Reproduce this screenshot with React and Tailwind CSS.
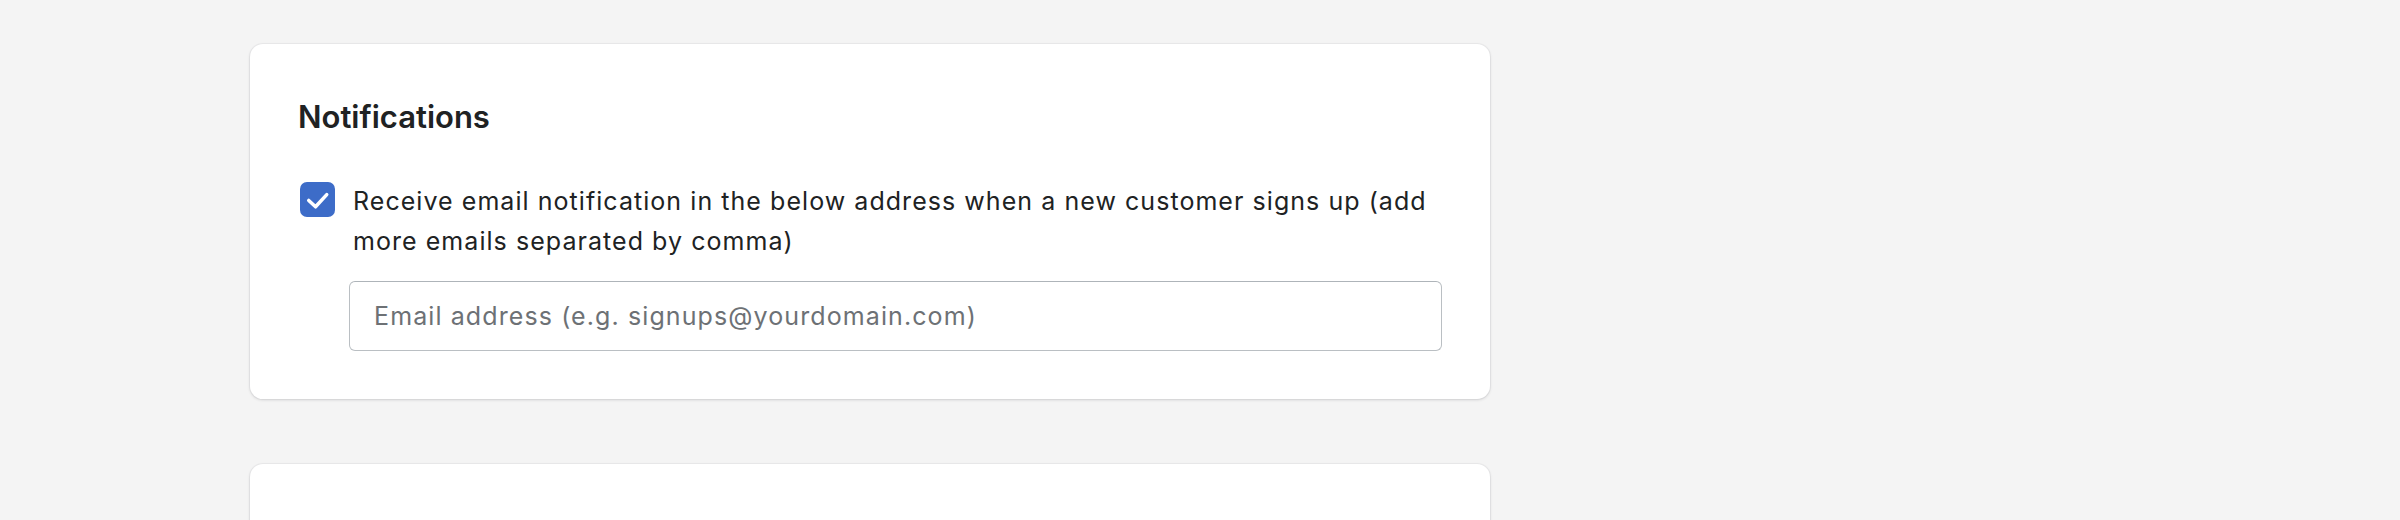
import React from 'react'

// 通知设置卡片
function CheckIcon() {
  return (
    <svg width="35" height="35" viewBox="0 0 36 36" fill="none">
      <path d="M9 19 L16 25.5 L27.5 13" stroke="#ffffff" strokeWidth="3.6" strokeLinecap="round" strokeLinejoin="round" />
    </svg>
  )
}

function NotificationsCard() {
  return (
    <div className="w-[1240px] rounded-[13px] bg-white px-12 pt-[55px] pb-12 shadow-[0_0_0_1px_rgba(63,63,68,0.04),0_1px_3px_rgba(63,63,68,0.18)]">
      <h2 className="text-[31px] leading-[36px] font-semibold text-[#202223]">Notifications</h2>

      {/* 复选框 + 说明 */}
      <div className="mt-[46px] flex items-start gap-[18px]">
        <div className="ml-[2px] mt-px flex h-[35px] w-[35px] shrink-0 items-center justify-center rounded-[7px] bg-[#3d6cc8]">
          <CheckIcon />
        </div>
        <div className="text-[25px] leading-[40px] tracking-[1.05px] text-[#202223]">
          Receive email notification in the below address when a new customer signs up (add more emails separated by comma)
        </div>
      </div>

      {/* 邮箱输入框 */}
      <div className="ml-[51px] mt-[20px]">
        <input
          type="text"
          placeholder="Email address (e.g. signups@yourdomain.com)"
          className="h-[70px] w-full rounded-[6px] border border-[#babfc3] border-t-[#aeb4b9] bg-white pl-[24px] pr-4 text-[25px] tracking-[1.1px] text-[#202223] placeholder:text-[#6d7175] outline-none"
        />
      </div>
    </div>
  )
}

export default function App() {
  return (
    <div
      className="min-h-[520px] w-full overflow-hidden bg-[#f4f4f4] pl-[250px] pt-[44px]"
      style={{ fontFamily: 'Inter, "Noto Sans", "Liberation Sans", sans-serif' }}
    >
      <div className="flex flex-col gap-[65px]">
        <NotificationsCard />
        <div className="h-[120px] w-[1240px] rounded-[13px] bg-white shadow-[0_0_0_1px_rgba(63,63,68,0.04),0_1px_3px_rgba(63,63,68,0.18)]" />
      </div>
    </div>
  )
}
